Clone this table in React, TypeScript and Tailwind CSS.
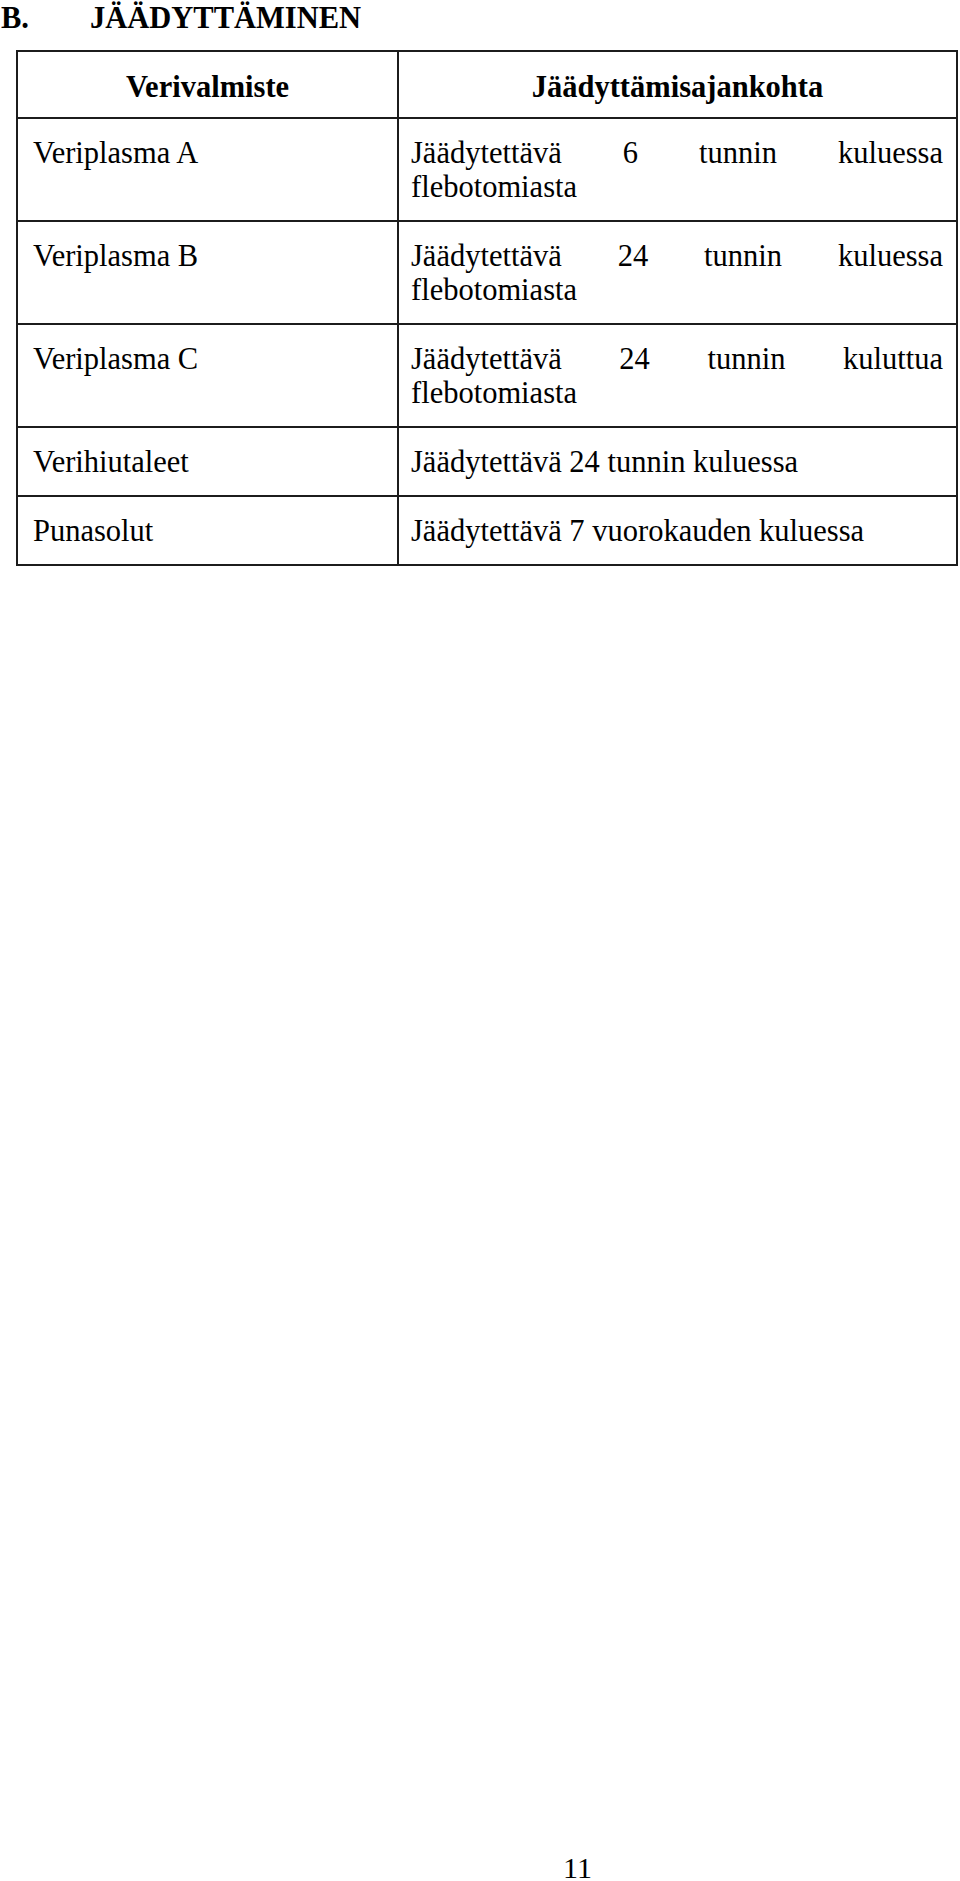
const rows: { name: string; first: string[] | null; text: string }[] = [
  { name: "Veriplasma A", first: ["Jäädytettävä", "6", "tunnin", "kuluessa"], text: "flebotomiasta" },
  { name: "Veriplasma B", first: ["Jäädytettävä", "24", "tunnin", "kuluessa"], text: "flebotomiasta" },
  { name: "Veriplasma C", first: ["Jäädytettävä", "24", "tunnin", "kuluttua"], text: "flebotomiasta" },
  { name: "Verihiutaleet", first: null, text: "Jäädytettävä 24 tunnin kuluessa" },
  { name: "Punasolut", first: null, text: "Jäädytettävä 7 vuorokauden kuluessa" },
];

export default function App() {
  return (
    <div className="flex h-[1881px] w-[960px] flex-col bg-white font-['Liberation_Serif','Times_New_Roman',serif] text-black">
      <h1 className="flex pl-[1px] pt-[1px] text-[30.5px] font-bold leading-[34px]">
        <span className="w-[89px]">B.</span>
        <span>JÄÄDYTTÄMINEN</span>
      </h1>

      <table className="ml-[16px] mt-[15px] w-[942px] table-fixed border-collapse text-[30.5px] leading-[34px]">
        <colgroup>
          <col className="w-[381px]" />
          <col className="w-[559px]" />
        </colgroup>
        <thead>
          <tr>
            <th className="border-2 border-[#1c1c1c] pb-[13px] pt-[18px] text-center font-bold">
              Verivalmiste
            </th>
            <th className="border-2 border-[#1c1c1c] pb-[13px] pt-[18px] text-center font-bold">
              Jäädyttämisajankohta
            </th>
          </tr>
        </thead>
        <tbody>
          {rows.map((row) => (
            <tr key={row.name}>
              <td className="border-2 border-[#1c1c1c] pb-[16px] pl-[15px] pt-[17px] align-top">
                {row.name}
              </td>
              <td className="border-2 border-[#1c1c1c] pb-[16px] pl-[12px] pr-[13px] pt-[17px] align-top">
                {row.first && (
                  <div className="flex justify-between">
                    {row.first.map((w) => (
                      <span key={w}>{w}</span>
                    ))}
                  </div>
                )}
                <div>{row.text}</div>
              </td>
            </tr>
          ))}
        </tbody>
      </table>

      <div className="flex-1" />
      <div className="pl-[563px] text-[30px] leading-[26px]">11</div>
    </div>
  );
}
